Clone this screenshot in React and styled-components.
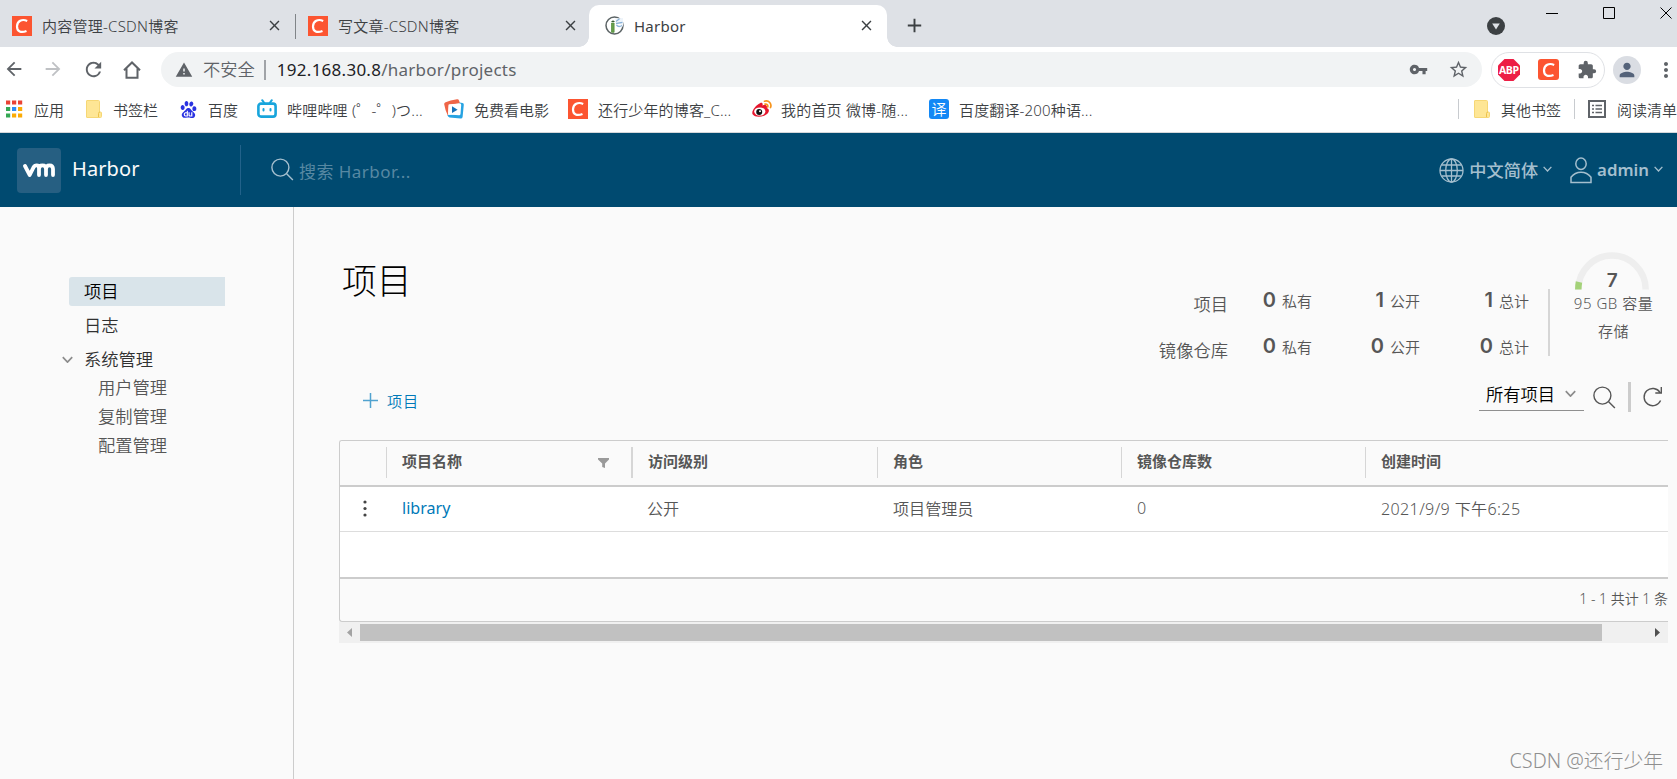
import React from "react";
import styled, { createGlobalStyle } from "styled-components";
import {
  MdVpnKey, MdStarBorder, MdExtension, MdPerson, MdMoreVert, MdRefresh,
  MdArrowBack, MdArrowForward, MdWarning, MdClose, MdAdd,
} from "react-icons/md";
import { SiBaidu } from "react-icons/si";

const Global = createGlobalStyle`
  * { box-sizing: border-box; }
  html, body { margin: 0; height: 100%; overflow: hidden; background: #fafafa; }
  body { font-family: "Noto Sans", "Noto Sans CJK SC", sans-serif; font-size: 15px; font-weight: 350; color: #565656; }
  svg { display: block; flex: none; }
`;

const Page = styled.div`
  position: relative;
  display: flex;
  flex-direction: column;
  width: 1677px;
  height: 779px;
  overflow: hidden;
  white-space: nowrap;
`;

/* ---------- browser chrome ---------- */
const TabStrip = styled.div`
  display: flex;
  height: 47px;
  padding-top: 5px;
  background: #dee1e6;
`;
const Tab = styled.div`
  position: relative;
  display: flex;
  align-items: center;
  width: ${(p) => p.$w}px;
  height: 42px;
  padding: 0 ${(p) => p.$pr || 12}px 1px ${(p) => p.$pl}px;
  color: #3c4043;
  font-size: 15px;
  font-weight: ${(p) => (p.$active ? 400 : 350)};
  background: ${(p) => (p.$active ? "#fff" : "transparent")};
  border-radius: 10px 10px 0 0;
  ${(p) => p.$active && `
    &::before, &::after {
      content: ""; position: absolute; bottom: 0; width: 10px; height: 10px;
    }
    &::before { left: -10px; background: radial-gradient(circle at 0 0, #dee1e6 9.5px, #fff 10px); }
    &::after { right: -10px; background: radial-gradient(circle at 100% 0, #dee1e6 9.5px, #fff 10px); }
  `}
`;
const TabTitle = styled.span`
  flex: 1;
  margin-left: 10px;
  letter-spacing: .25px;
`;
const TabDivider = styled.i`
  width: 1px;
  height: 25px;
  margin-top: 9px;
  background: #808488;
`;
const NewTab = styled.div`
  padding: 9px 0 0 16px;
  color: #3c4043;
`;
const WindowControls = styled.div`
  display: flex;
  margin-left: auto;
  padding: 2px 4px 0 0;
`;
const SearchTabs = styled.div`
  padding: 10px 41px 0 0;
`;
const WinButton = styled.div`
  width: 13px;
  margin-left: ${(p) => p.$ml}px;
`;
const CBadge = styled.span`
  display: flex;
  align-items: center;
  justify-content: center;
  flex: none;
  width: ${(p) => p.$w || 20}px;
  height: ${(p) => p.$w || 20}px;
  background: #fc5531;
  border-radius: ${(p) => p.$r || 0}px;
`;
const Toolbar = styled.div`
  display: flex;
  align-items: center;
  height: 45px;
  background: #fff;
  color: #5f6368;
`;
const NavButtons = styled.div`
  display: flex;
  gap: 17px;
  padding-left: 3px;
  width: 161px;
  flex: none;
  svg:nth-child(3) { margin-left: 1px; margin-right: -2px; }
`;
const Omnibox = styled.div`
  display: flex;
  align-items: center;
  flex: none;
  width: 1321px;
  height: 35px;
  padding: 0 13px 0 14px;
  border-radius: 18px;
  background: #f1f3f4;
  font-size: 17.3px;
`;
const Insecure = styled.span`
  margin-left: 10px;
  padding-right: 9px;
  border-right: 2px solid #a0a3a7;
  line-height: 20px;
`;
const Url = styled.span`
  flex: 1;
  margin-left: 11px;
  font-size: 17px;
  font-weight: 400;
  letter-spacing: .26px;
  b { font-weight: inherit; color: #202124; }
`;
const OmniIcons = styled.span`
  display: flex;
  align-items: center;
  gap: 20px;
`;
const Extensions = styled.div`
  display: flex;
  align-items: center;
  flex: none;
  gap: 18px;
  width: 114px;
  height: 36px;
  margin-left: 9px;
  padding-left: 6px;
  border: 1px solid #dfe1e5;
  border-radius: 18px;
`;
const Avatar = styled.div`
  display: flex;
  align-items: center;
  justify-content: center;
  flex: none;
  width: 28px;
  height: 28px;
  margin: 0 13px 0 8px;
  border-radius: 50%;
  background: #dadde3;
  color: #55637a;
`;
const KebabWrap = styled.div`
  flex: none;
`;
const Bookmarks = styled.div`
  display: flex;
  align-items: center;
  height: 41px;
  padding: 0 0 6px;
  border-bottom: 1px solid #d5d7da;
  background: #fff;
  color: #3c4043;
`;
const Bookmark = styled.div`
  display: flex;
  align-items: center;
  flex: none;
  width: ${(p) => p.$w}px;
  padding-left: ${(p) => p.$pl || 0}px;
  gap: ${(p) => p.$gap || 11}px;
  font-size: 15px;
  letter-spacing: ${(p) => p.$ls || 0}px;
`;
const BookmarkDivider = styled.i`
  width: 1px;
  height: 20px;
  background: #c8cbcf;
`;
const Spacer = styled.div`
  flex: 1;
`;
const Translate = styled.span`
  width: 20px;
  height: 20px;
  border-radius: 3px;
  background: #1388f5;
  color: #fff;
  font-size: 15px;
  line-height: 20px;
  text-align: center;
`;

/* ---------- application header ---------- */
const Header = styled.header`
  display: flex;
  align-items: center;
  height: 74px;
  flex: none;
  padding: 0 14px 0 17px;
  background: #004a70;
`;
const Brand = styled.div`
  display: flex;
  align-items: center;
  width: 224px;
  height: 50px;
  border-right: 1px solid #22628a;
  color: #fafafa;
  font-size: 20px;
  font-weight: 400;
`;
const Logo = styled.span`
  display: flex;
  align-items: center;
  justify-content: center;
  width: 44px;
  height: 45px;
  margin-right: 11px;
  border-radius: 4px;
  background: #265f82;
`;
const BrandName = styled.span`
  letter-spacing: .1px;
  margin-top: -3px;
`;
const Search = styled.div`
  display: flex;
  align-items: center;
  flex: 1;
  margin-left: 30px;
  gap: 5px;
  color: #5788a2;
  font-size: 17px;
  svg { margin-top: -1px; }
  span { margin-top: 1px; letter-spacing: .45px; font-weight: 400; }
`;
const HeaderMenu = styled.div`
  display: flex;
  align-items: center;
  margin-left: ${(p) => p.$ml || 0}px;
  gap: 5px;
  color: #a4bfce;
  font-size: ${(p) => p.$size || 17.2}px;
  font-weight: ${(p) => p.$weight || 500};
  padding-bottom: 2px;
  svg:first-child { position: relative; top: 1px; }
`;

/* ---------- body ---------- */
const Body = styled.div`
  display: flex;
  flex: 1;
  background: #fafafa;
`;
const Sidebar = styled.nav`
  width: 294px;
  padding: 70px 0 0 69px;
  border-right: 1px solid #ccc;
`;
const NavItem = styled.div`
  display: flex;
  align-items: center;
  width: 156px;
  height: 29px;
  margin-bottom: 5px;
  padding: 0 0 3px 15px;
  border-radius: 3px 0 0 3px;
  background: ${(p) => (p.$active ? "#d9e4ea" : "transparent")};
  color: ${(p) => (p.$active ? "#000" : "#313131")};
  font-size: 17.3px;
`;
const NavGroup = styled(NavItem)`
  width: 163px;
  margin: 0 0 0 -7px;
  padding-left: 0;
  gap: 11px;
  svg { margin-top: 3px; }
`;
const NavChild = styled(NavItem)`
  margin: 0;
  padding: 0 0 4px 29px;
  color: #565656;
`;
const Main = styled.main`
  flex: 1;
  min-width: 0;
  padding-left: 45px;
`;
const Summary = styled.div`
  display: flex;
  height: 171px;
  padding-right: 22px;
`;
const Title = styled.h1`
  flex: 1;
  margin: 49px 0 0 3px;
  color: #000;
  font-size: 34.8px;
  font-weight: 300;
  line-height: 50px;
`;
const Stats = styled.div`
  display: grid;
  grid-template-columns: 85px 84px 108px 109px;
  grid-auto-rows: 46px;
  margin-top: 70px;
  height: 92px;
  text-align: right;
  align-items: center;
`;
const StatLabel = styled.span`
  padding-top: 6px;
  font-size: 17.3px;
`;
const Stat = styled.span`
  display: flex;
  justify-content: flex-end;
  align-items: baseline;
  gap: 6px;
  font-size: 15px;
  b { font: 600 20px Inter, sans-serif; line-height: 22px; }
`;
const StatDivider = styled.i`
  width: 2px;
  height: 67px;
  margin: 82px 24px 0 19px;
  background: #d6d6d6;
`;
const Gauge = styled.div`
  position: relative;
  width: 81px;
  padding-top: 45px;
  font-size: 15px;
  letter-spacing: .5px;
  line-height: 28px;
  text-align: center;
  svg { margin-left: 1px; }
  p { margin: 0 1px 0 -1px; position: relative; top: -1px; }
`;
const GaugeValue = styled.b`
  position: absolute;
  top: 60px;
  left: 0;
  width: 77px;
  font: 600 19px Inter, sans-serif;
  line-height: 28px;
`;
const Actions = styled.div`
  display: flex;
  height: 62px;
  padding-right: 7px;
`;
const NewProject = styled.div`
  display: flex;
  align-items: center;
  flex: 1;
  height: 44px;
  padding-left: 23px;
  gap: 9px;
  color: #0079b8;
  font-size: 15.2px;
  letter-spacing: .8px;
`;
const Select = styled.div`
  display: flex;
  align-items: center;
  justify-content: space-between;
  width: 105px;
  height: 33px;
  padding: 0 8px 1px 7px;
  border-bottom: 1px solid #8f8f8f;
  color: #000;
  font-size: 17.3px;
`;
const ActionIcons = styled.div`
  display: flex;
  align-items: center;
  width: 77px;
  height: 32px;
  margin: 3px 0 0 9px;
`;
const Bar = styled.i`
  width: 3px;
  height: 30px;
  margin: 0 12px;
  background: #ccc;
`;
const Grid = styled.div`
  width: 1329px;
  border: 1px solid #ccc;
  border-right: 0;
  border-radius: 3px 0 0 3px;
  overflow: hidden;
`;
const Row = styled.div`
  display: grid;
  grid-template-columns: 46px 245px 246px 244px 244px 1fr;
  align-items: center;
  height: ${(p) => p.$h}px;
  background: ${(p) => (p.$head ? "#fafafa" : "#fff")};
  border-bottom: ${(p) => (p.$line === 2 ? "2px solid #ccc" : "1px solid #ddd")};
`;
const HeadCell = styled.div`
  display: flex;
  align-items: center;
  justify-content: space-between;
  height: 31px;
  margin-top: -1px;
  padding: 0 22px 5px 15px;
  border-left: ${(p) => p.$b || 1}px solid #d6d6d6;
  font-size: 15px;
  font-weight: 600;
  svg { margin-top: 6px; }
`;
const Cell = styled.div`
  padding: 0 0 2px 16px;
  color: ${(p) => (p.$link ? "#0079b8" : "#565656")};
  font-size: 16.1px;
  font-weight: ${(p) => (p.$link ? 400 : 350)};
  letter-spacing: ${(p) => p.$ls || 0}px;
  svg { margin-left: 7px; }
`;
const Footer = styled.div`
  display: flex;
  justify-content: flex-end;
  align-items: center;
  height: 42px;
  padding-bottom: 5px;
  font-size: 14px;
`;
const Scrollbar = styled.div`
  display: flex;
  align-items: center;
  justify-content: space-between;
  width: 1329px;
  height: 21px;
  padding: 0 8px;
  background: #f0f0f0;
`;
const Thumb = styled.div`
  width: 1242px;
  height: 17px;
  margin: 0 auto 0 8px;
  background: #c1c1c1;
`;
const Watermark = styled.div`
  position: absolute;
  right: 14px;
  bottom: 3px;
  color: #8f8f8f;
  font-size: 19.8px;
  font-weight: 300;
  line-height: 30px;
`;

const CLetter = ({ size = 20 }) => (
  <svg width={size} height={size} viewBox="0 0 20 20" fill="none" stroke="#fff" strokeWidth="2.2">
    <path d="M15.2 4.900C9.800 2.500 5.300 5.200 5 10.200c-.2 5.400 4.200 7 9.500 4.700" />
  </svg>
);
const Caret = ({ w = 9, color = "currentColor", sw = 1.5 }) => (
  <svg width={w} height={w * 0.7} viewBox="0 0 10 7" fill="none" stroke={color} strokeWidth={sw}>
    <path d="M.7 1 5 5.6 9.3 1" />
  </svg>
);
const Magnifier = ({ color }) => (
  <svg width="23" height="23" viewBox="0 0 23 23" fill="none" stroke={color} strokeWidth="1.4">
    <circle cx="9.4" cy="9.6" r="8.5" /><path d="m15.6 15.7 6.3 6.3" />
  </svg>
);
const Folder = () => (
  <svg width="16" height="18" viewBox="0 0 16 18">
    <path d="M1 .5h11.500q1 0 1 1V12h1q1 0 1 1v3.500q0 1-1 1H1q-.5 0-.5-.5V1Q.5.5 1 .5Z" fill="#fee695" stroke="#f6d775" />
    <path d="M12.500 17v-3.500q0-1.500 1.500-1.500" fill="none" stroke="#edc249" />
  </svg>
);
const Apps = () => {
  const colors = ["#ea4335", "#ea4335", "#ea4335", "#34a853", "#2f8df5", "#fbab05", "#34a853", "#fbab05", "#fbab05"];
  return (
    <svg width="17" height="18" viewBox="0 0 17 18">
      {colors.map((c, i) => (
        <rect key={i} x={(i % 3) * 6} y={Math.floor(i / 3) * 6.5 + 0.5} width="4.200" height="4" fill={c} />
      ))}
    </svg>
  );
};
const Bilibili = () => (
  <svg width="20" height="20" viewBox="0 0 20 20" fill="none" stroke="#18a5dc" strokeWidth="2.6" strokeLinecap="round">
    <rect x="1.4" y="4.600" width="17.2" height="13" rx="2.600" /><path d="M5.200 1.200 7.300 4M14.800 1.200 12.700 4M6.500 10v1.600M13.500 10v1.600" strokeWidth="2" />
  </svg>
);
const Movie = () => (
  <svg width="20" height="20" viewBox="0 0 20 20">
    <path d="M1.600 3.200Q6 1.400 13 .2q1.600-.2 2 1.200l1 2.800L5 6 4 17Q1 11 .2 5.300 0 3.800 1.600 3.200Z" fill="#ef6547" />
    <path d="M15.500 3.500l3 .5q1.400.3 1.300 1.800L18.600 18q-.3 1.600-2 1.500L5.500 18.400Q3.700 18 3.500 16l12-1Z" fill="#27a3e2" />
    <path d="M5.500 5.200 16 4.500q1.300 0 1.200 1.400L16.500 15q-.2 1.400-1.500 1.300L5.200 15.600q-1.200-.2-1.100-1.500L4.400 6.400Q4.400 5.300 5.500 5.200Z" fill="#fff" /><path d="m8 7.200 5.600 3.500L8 14Z" fill="#1872b8" />
  </svg>
);
const Weibo = () => (
  <svg width="20" height="18" viewBox="0 0 20 18">
    <path d="M8 3.200c2-1 3.200.2 2.500 2.300 3-1 5.200 0 4.300 2.400 2.800.8 2.700 4 .2 6.200-4 3.500-12.400 3.700-14.400.2C-1 11 4 5 8 3.200Z" fill="#e6162d" />
    <ellipse cx="7.800" cy="11.500" rx="5.600" ry="4.100" fill="#fff" /><circle cx="7.200" cy="12" r="3" fill="#111" /><circle cx="8" cy="11.300" r="1" fill="#fff" />
    <path d="M12.500 1.200c4.500-1.200 7.500 2.500 6 6.300M13 4.200c2-.4 3.300 1 2.700 2.700" fill="none" stroke="#f7941d" strokeWidth="1.700" strokeLinecap="round" />
  </svg>
);
const HarborIcon = () => (
  <svg width="19" height="19" viewBox="0 0 19 19" fill="none">
    <circle cx="9.500" cy="9.500" r="8.500" stroke="#5b6365" strokeWidth="1.500" />
    <path d="M9.500 2.500 18 2v9Z" fill="#eef4fa" />
    <path d="M6.500 7h2.600v9.300H6.500Z" fill="#66a04a" stroke="#598f45" strokeWidth=".8" /><path d="M5.800 6 8 4.200 10.200 6Z" fill="#355c35" />
    <path d="m11 5.500 3.500-2.800M11 7.500l6.500-1.200M11.500 9c1.500 2 4 1.500 5.500.5" stroke="#8ab2d8" strokeWidth="1.300" />
  </svg>
);
const ReadingList = () => (
  <svg width="18" height="18" viewBox="0 0 18 18" stroke="#5f6368" fill="none" strokeWidth="2">
    <path d="M1 1h16v16H1Z" /><path d="M4 5.500h2M4 9h2M4 12.500h2M7.500 5.500H14M7.500 9H14M7.500 12.500H14" strokeWidth="1.500" />
  </svg>
);
const Abp = () => (
  <svg width="22" height="22" viewBox="0 0 22 22">
    <path d="M6.500 0h9L22 6.500v9L15.500 22h-9L0 15.500v-9Z" fill="#ed1e45" />
    <text x="11" y="15" textAnchor="middle" fontFamily="Open Sans, sans-serif" fontWeight="700" fontSize="10.500" textLength="20" fill="#fff">ABP</text>
  </svg>
);
const VmLogo = () => (
  <svg width="32" height="15" viewBox="0 0 32 15" fill="none" stroke="#fff" strokeWidth="3.800" strokeLinecap="round" strokeLinejoin="round">
    <path d="M2 3 6.700 12 10.500 4.300Q11.500 2.300 13.700 2.300q2.300 0 2.300 3V12M16 6q0-3.700 3.500-3.700T23 6v6M23 6q0-3.700 3.500-3.700T30 6v6" />
  </svg>
);
const Globe = () => (
  <svg width="25" height="25" viewBox="0 0 25 25" fill="none" stroke="currentColor" strokeWidth="1.300">
    <circle cx="12.500" cy="12.500" r="11.500" /><ellipse cx="12.500" cy="12.500" rx="5.800" ry="11.500" />
    <path d="M12.500 1v23M1 12.500h23M3 7h19M3 18h19" />
  </svg>
);
const User = () => (
  <svg width="22" height="27" viewBox="0 0 22 27" fill="none" stroke="currentColor" strokeWidth="1.500">
    <ellipse cx="11" cy="6.700" rx="5.200" ry="5.700" /><path d="M1 25.500v-5.200q3.800-5 10-5t10 5v5.200Z" />
  </svg>
);
const Plus = () => (
  <svg width="16" height="15" viewBox="0 0 16 15" stroke="#50a2cf" strokeWidth="1.500"><path d="M8.500 0v15M1 7.500h15" /></svg>
);
const Funnel = () => (
  <svg width="11" height="10" viewBox="0 0 11 10" fill="#9a9a9a"><path d="M0 0h11v1.500L7 5.500V10L4.200 9V5.500L0 1.500Z" /></svg>
);
const Dots = () => (
  <svg width="4" height="17" viewBox="0 0 4 17" fill="#444"><circle cx="2" cy="2" r="1.600" /><circle cx="2" cy="8.500" r="1.600" /><circle cx="2" cy="15" r="1.600" /></svg>
);
const Reload = () => (
  <svg width="20" height="22" viewBox="0 0 20 22" fill="none" stroke="#565656" strokeWidth="1.400">
    <path d="M17.600 14.500A8.600 8.600 0 1 1 17 6.500M18.300 1v6h-6" />
  </svg>
);
const Home = () => (
  <svg width="24" height="24" viewBox="0 0 24 24" fill="none" stroke="currentColor" strokeWidth="2"><path d="M4 12.300 12 4.500l8 7.800M6.500 10.500v9.200h11v-9.200" /></svg>
);

export default function App() {
  return (
    <Page>
      <Global />
      <TabStrip>
        <Tab $w={295} $pl={12}><CBadge><CLetter /></CBadge><TabTitle>内容管理-CSDN博客</TabTitle><MdClose size={17} /></Tab>
        <TabDivider />
        <Tab $w={293} $pl={12} $pr={10}><CBadge><CLetter /></CBadge><TabTitle>写文章-CSDN博客</TabTitle><MdClose size={17} /></Tab>
        <Tab $w={298} $pl={16} $active><HarborIcon /><TabTitle>Harbor</TabTitle><MdClose size={17} /></Tab>
        <NewTab><MdAdd size={23} /></NewTab>
        <WindowControls>
          <SearchTabs>
            <svg width="18" height="18" viewBox="0 0 18 18"><circle cx="9" cy="9" r="9" fill="#3c4043" /><path d="M5.200 6.500h7.600L9 12.500Z" fill="#dee1e6" /></svg>
          </SearchTabs>
          {["M0 6.500h12", "M.5.500h11v11H.5Z", "m.5.500 11 11m0-11-11 11"].map((d, i) => (
            <WinButton key={d} $ml={i ? 44 : 0}><svg width="12" height="13" viewBox="0 0 12 13" fill="none" stroke="#000" strokeWidth="1"><path d={d} /></svg></WinButton>
          ))}
        </WindowControls>
      </TabStrip>
      <Toolbar>
        <NavButtons><MdArrowBack size={22} /><MdArrowForward size={22} color="#bfc1c4" /><MdRefresh size={23} /><Home /></NavButtons>
        <Omnibox>
          <MdWarning size={18} /><Insecure>不安全</Insecure>
          <Url><b>192.168.30.8</b>/harbor/projects</Url>
          <OmniIcons><MdVpnKey size={19} /><MdStarBorder size={21} /></OmniIcons>
        </Omnibox>
        <Extensions><Abp /><CBadge $w={21} $r={3}><CLetter /></CBadge><MdExtension size={20} /></Extensions>
        <Avatar><MdPerson size={22} /></Avatar>
        <KebabWrap><MdMoreVert size={24} /></KebabWrap>
      </Toolbar>
      <Bookmarks>
        <Bookmark $w={86} $pl={6}><Apps />应用</Bookmark>
        <Bookmark $w={94}><Folder />书签栏</Bookmark>
        <Bookmark $w={77}><SiBaidu size={17} color="#2932e1" />百度</Bookmark>
        <Bookmark $w={187} $gap={10} $ls={0.2}><Bilibili />哔哩哔哩 (゜-゜)つ...</Bookmark>
        <Bookmark $w={124} $gap={10}><Movie />免费看电影</Bookmark>
        <Bookmark $w={184} $gap={10} $ls={0.15}><CBadge><CLetter /></CBadge>还行少年的博客_C...</Bookmark>
        <Bookmark $w={177} $gap={9} $ls={0.2}><Weibo />我的首页 微博-随...</Bookmark>
        <Bookmark $w={180} $gap={10} $ls={0.15}><Translate>译</Translate>百度翻译-200种语...</Bookmark>
        <Spacer />
        <BookmarkDivider />
        <Bookmark $w={115} $pl={15}><Folder />其他书签</Bookmark>
        <BookmarkDivider />
        <Bookmark $w={102} $pl={13}><ReadingList />阅读清单</Bookmark>
      </Bookmarks>

      <Header>
        <Brand><Logo><VmLogo /></Logo><BrandName>Harbor</BrandName></Brand>
        <Search><Magnifier color="#a4bfce" /><span>搜索 Harbor...</span></Search>
        <HeaderMenu><Globe />中文简体<Caret /></HeaderMenu>
        <HeaderMenu $ml={18} $weight={600} $size={16.8}><User />admin<Caret /></HeaderMenu>
      </Header>

      <Body>
        <Sidebar>
          <NavItem $active>项目</NavItem>
          <NavItem>日志</NavItem>
          <NavGroup><Caret w={11} color="#8c8c8c" />系统管理</NavGroup>
          <NavChild>用户管理</NavChild>
          <NavChild>复制管理</NavChild>
          <NavChild>配置管理</NavChild>
        </Sidebar>
        <Main>
          <Summary>
            <Title>项目</Title>
            <Stats>
              <StatLabel>项目</StatLabel>
              <Stat><b>0</b>私有</Stat><Stat><b>1</b>公开</Stat><Stat><b>1</b>总计</Stat>
              <StatLabel>镜像仓库</StatLabel>
              <Stat><b>0</b>私有</Stat><Stat><b>0</b>公开</Stat><Stat><b>0</b>总计</Stat>
            </Stats>
            <StatDivider />
            <Gauge>
              <svg width="74" height="38" viewBox="0 0 74 38" fill="none" strokeWidth="6.500">
                <path d="M3.300 37.500a33.700 34 0 0 1 67.400 0" stroke="#eee" />
                <path d="M3.300 37.500q0-4 .7-7.500" stroke="#a4d279" />
              </svg>
              <GaugeValue>7</GaugeValue>
              <p>95 GB 容量</p><p>存储</p>
            </Gauge>
          </Summary>
          <Actions>
            <NewProject><Plus />项目</NewProject>
            <Select>所有项目<Caret w={11} color="#8c8c8c" /></Select>
            <ActionIcons><Magnifier color="#565656" /><Bar /><Reload /></ActionIcons>
          </Actions>
          <Grid>
            <Row $h={46} $head $line={2}>
              <span />
              <HeadCell>项目名称<Funnel /></HeadCell>
              <HeadCell $b={2}>访问级别</HeadCell>
              <HeadCell>角色</HeadCell>
              <HeadCell>镜像仓库数</HeadCell>
              <HeadCell>创建时间</HeadCell>
            </Row>
            <Row $h={45}>
              <Cell><Dots /></Cell>
              <Cell $link>library</Cell><Cell>公开</Cell><Cell>项目管理员</Cell><Cell>0</Cell><Cell $ls={0.35}>2021/9/9 下午6:25</Cell>
            </Row>
            <Row $h={47} $line={2} />
            <Footer>1 - 1 共计 1 条</Footer>
          </Grid>
          <Scrollbar>
            <svg width="5" height="9" viewBox="0 0 5 9"><path d="M5 0v9L0 4.500Z" fill="#a3a3a3" /></svg>
            <Thumb />
            <svg width="5" height="9" viewBox="0 0 5 9"><path d="M0 0v9l5-4.500Z" fill="#505050" /></svg>
          </Scrollbar>
        </Main>
      </Body>
      <Watermark>CSDN @还行少年</Watermark>
    </Page>
  );
}
